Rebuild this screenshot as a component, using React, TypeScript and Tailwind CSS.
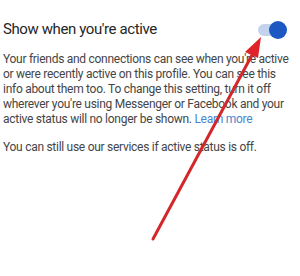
import React from "react";

export default function App() {
  return (
    <div className="relative w-[300px] h-[276px] bg-white overflow-hidden font-['Roboto',_'Noto_Sans',_sans-serif]">
      <div className="pl-[3px] pr-[10px] pt-[19px]">
        <div className="flex items-center justify-between h-[20px]">
          <span className="text-[15px] leading-[20px] tracking-[-0.4px] text-[#262626]">Show when you're active</span>
          <div className="relative w-[30px] h-[18px] mr-[3px] mt-[1px]">
            <div className="absolute left-[1px] top-[3px] w-[22px] h-[12px] rounded-full bg-[#c3d3ee]" />
            <div className="absolute right-0 top-0 w-[18px] h-[18px] rounded-full bg-[#1d57c2]" />
          </div>
        </div>
        <p className="mt-[13px] text-[12px] leading-[15px] tracking-[-0.28px] text-[#454545] whitespace-nowrap">
          Your friends and connections can see when you're active<br />
          or were recently active on this profile. You can see this<br />
          info about them too. To change this setting, turn it off<br />
          wherever you're using Messenger or Facebook and your<br />
          active status will no longer be shown. <span className="text-[#4a86cf]">Learn more</span>
        </p>
        <p className="mt-[13px] text-[12px] leading-[15px] tracking-[-0.28px] text-[#454545]">
          You can still use our services if active status is off.
        </p>
      </div>
      <svg className="absolute left-0 top-0" width="300" height="276" viewBox="0 0 300 276">
        <line x1="153" y1="239" x2="252" y2="55" stroke="#d3282b" strokeWidth="3" strokeLinecap="round" />
        <polygon points="261,37 245,52 258,58" fill="#e0222a" />
      </svg>
    </div>
  );
}
